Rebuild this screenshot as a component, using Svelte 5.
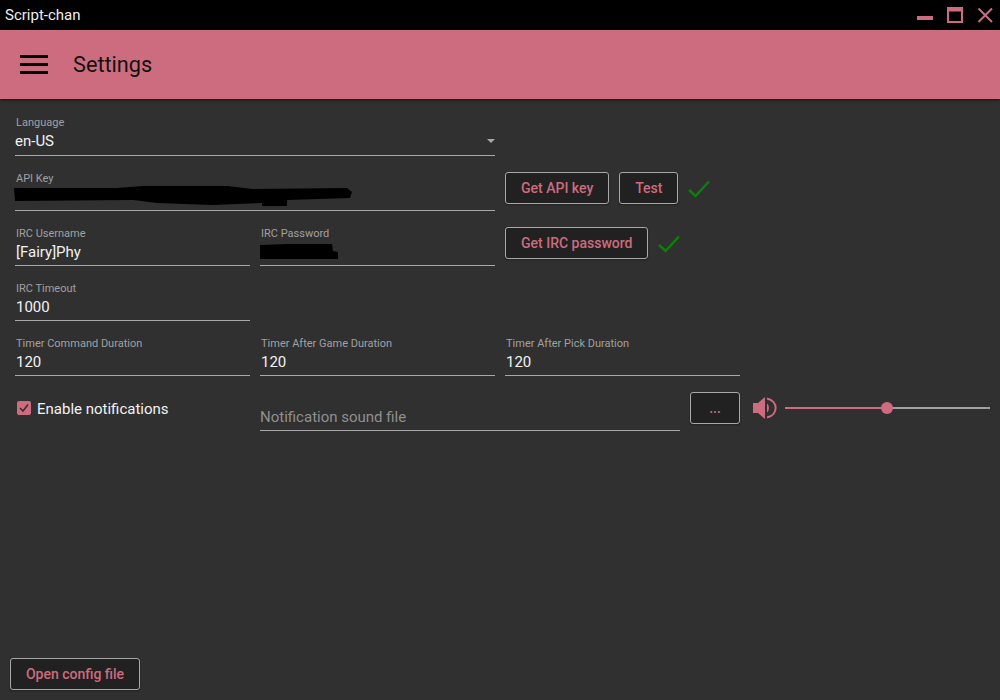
<script>
  const timers = [
    { label: 'Timer Command Duration', value: '120' },
    { label: 'Timer After Game Duration', value: '120' },
    { label: 'Timer After Pick Duration', value: '120' }
  ];
</script>

<div class="window">
  <div class="titlebar">
    <span class="title">Script-chan</span>
    <div class="controls">
      <svg class="ctl" width="16" height="16" viewBox="0 0 16 16"><rect x="0" y="9" width="16" height="4" fill="#cd6c7e"/></svg>
      <svg class="ctl" width="16" height="16" viewBox="0 0 16 16"><path d="M1 3.500H15V15H1Z" fill="none" stroke="#cd6c7e" stroke-width="2"/><rect x="0" y="0" width="16" height="4" fill="#cd6c7e"/></svg>
      <svg class="ctl" width="16" height="16" viewBox="0 0 16 16"><path d="M1.500 1.500L15 15M15 1.500L1.500 15" fill="none" stroke="#cd6c7e" stroke-width="2"/></svg>
    </div>
  </div>

  <header class="appbar">
    <svg class="menu" width="28" height="19" viewBox="0 0 28 19"><path d="M0 1.500H28M0 9.500H28M0 17.500H28" stroke="#000" stroke-width="3"/></svg>
    <h1>Settings</h1>
  </header>

  <main class="content">
    <div class="row">
      <div class="field span2 first">
        <span class="label">Language</span>
        <span class="value select">en-US<i class="arrow"></i></span>
      </div>
    </div>

    <div class="row">
      <div class="field span2">
        <span class="label">API Key</span>
        <span class="value"></span>
        <svg class="blob blob-key" width="340" height="22" viewBox="0 0 340 22"><path d="M0 3L103 3L129 1L213 1L239 4L333 3L338 7L336 13L273 15L273 21L248 21L248 18L199 20L143 18L119 15L1 16Z" fill="#000"/></svg>
      </div>
      <div class="actions">
        <button>Get API key</button>
        <button class="test">Test</button>
        <svg class="check" width="22" height="18" viewBox="0 0 22 18"><path d="M1 10L7.500 16L21 1.500" fill="none" stroke="#0a800a" stroke-width="2.500"/></svg>
      </div>
    </div>

    <div class="row">
      <div class="field">
        <span class="label">IRC Username</span>
        <span class="value">[Fairy]Phy</span>
      </div>
      <div class="field">
        <span class="label">IRC Password</span>
        <span class="value"></span>
        <svg class="blob blob-pass" width="78" height="16" viewBox="0 0 78 16"><path d="M0 1L27 0L72 0L73 7L78 8L78 15L0 15Z" fill="#000"/></svg>
      </div>
      <div class="actions">
        <button>Get IRC password</button>
        <svg class="check" width="22" height="18" viewBox="0 0 22 18"><path d="M1 10L7.500 16L21 1.500" fill="none" stroke="#0a800a" stroke-width="2.500"/></svg>
      </div>
    </div>

    <div class="row">
      <div class="field">
        <span class="label">IRC Timeout</span>
        <span class="value">1000</span>
      </div>
    </div>

    <div class="row">
      {#each timers as t}
        <div class="field">
          <span class="label">{t.label}</span>
          <span class="value">{t.value}</span>
        </div>
      {/each}
    </div>

    <div class="row notif">
      <label class="checkbox">
        <span class="box">
          <svg width="14" height="14" viewBox="0 0 14 14"><path d="M3 7L6 10L11 3.500" fill="none" stroke="#303030" stroke-width="1.500"/></svg>
        </span>
        Enable notifications
      </label>
      <div class="field sound">
        <span class="value placeholder">Notification sound file</span>
      </div>
      <button class="dots">...</button>
      <svg class="speaker" width="24" height="24" viewBox="0 0 24 24">
        <path d="M0 7H5L12 1V23L5 17H0Z" fill="#cd6c7e"/>
        <path d="M14 7.500C16.500 9 16.500 15 14 16.500Z" fill="#cd6c7e"/>
        <path d="M14 2.500C25.500 5 25.500 19 14 21.500" fill="none" stroke="#cd6c7e" stroke-width="2"/>
      </svg>
      <div class="slider">
        <span class="thumb"></span>
      </div>
    </div>
  </main>

  <footer class="footer">
    <button class="config">Open config file</button>
  </footer>
</div>

<style>
  :global(body) {
    margin: 0;
    background: #303030;
  }
  .window {
    width: 1000px;
    height: 700px;
    display: flex;
    flex-direction: column;
    background: #303030;
    color: #fff;
    font-family: Roboto, "Liberation Sans", sans-serif;
    overflow: hidden;
  }
  .titlebar {
    height: 30px;
    flex: none;
    background: #000;
    display: flex;
    align-items: flex-start;
    justify-content: space-between;
  }
  .title {
    font-size: 15px;
    line-height: 30px;
    margin-left: 5px;
    color: #eee;
  }
  .controls {
    display: flex;
    gap: 14px;
    padding: 7px 7px 0 0;
  }
  .ctl {
    display: block;
  }
  .appbar {
    height: 69px;
    flex: none;
    background: #cd6c7e;
    display: flex;
    align-items: center;
    padding-left: 20px;
    box-shadow: 0 1px 3px rgba(0, 0, 0, 0.6);
    position: relative;
  }
  .menu {
    display: block;
  }
  h1 {
    margin: 0 0 0 25px;
    font-size: 21.700px;
    font-weight: 400;
    color: #111;
  }
  .content {
    flex: 1;
    padding: 2px 0 0 15px;
  }
  .row {
    display: flex;
    gap: 10px;
    height: 55px;
  }
  .field {
    position: relative;
    width: 235px;
    box-sizing: border-box;
    border-bottom: 1px solid #a8a8a8;
    display: flex;
    flex-direction: column;
    justify-content: flex-end;
    padding: 0 0 3px 1px;
  }
  .field.first {
    padding-bottom: 4px;
  }
  .span2 {
    width: 480px;
  }
  .label {
    font-size: 11px;
    line-height: 13px;
    color: #a0a0a0;
  }
  .value {
    font-size: 15px;
    line-height: 20px;
    height: 20px;
    margin-top: 2px;
    color: #f2f2f2;
  }
  .select {
    position: relative;
    margin-left: -1px;
  }
  .arrow {
    position: absolute;
    right: 0;
    top: 8px;
    border-left: 4px solid transparent;
    border-right: 4px solid transparent;
    border-top: 4px solid #a8a8a8;
  }
  .blob {
    position: absolute;
    display: block;
  }
  .blob-key {
    left: -1px;
    top: 29px;
  }
  .blob-pass {
    left: 0;
    top: 33px;
  }
  .actions {
    display: flex;
    align-items: flex-start;
    gap: 10px;
    padding-top: 16px;
  }
  button {
    height: 32px;
    box-sizing: border-box;
    padding: 0 15px;
    background: #212121;
    border: 1px solid #a8a8a8;
    border-radius: 3px;
    color: #cd6c7e;
    font: 500 14px Roboto, "Liberation Sans", sans-serif;
    box-shadow: 0 1px 2px rgba(0, 0, 0, 0.3);
  }
  .test {
    width: 59px;
    padding: 0;
  }
  .check {
    display: block;
    margin-top: 8px;
  }
  .notif {
    gap: 0;
    position: relative;
  }
  .checkbox {
    width: 245px;
    flex: none;
    display: flex;
    align-items: flex-start;
    gap: 6px;
    padding: 24px 0 0 2px;
    box-sizing: border-box;
    font-size: 15px;
    line-height: 18px;
    color: #f2f2f2;
  }
  .box {
    width: 14px;
    height: 14px;
    margin-top: 1px;
    border-radius: 2px;
    background: #cd6c7e;
    display: block;
  }
  .box svg {
    display: block;
  }
  .sound {
    width: 420px;
    flex: none;
    padding-left: 0;
  }
  .placeholder {
    color: #8f8f8f;
  }
  .dots {
    width: 50px;
    padding: 0;
    margin: 16px 0 0 10px;
    flex: none;
  }
  .speaker {
    display: block;
    flex: none;
    margin: 20px 0 0 13px;
  }
  .slider {
    position: relative;
    width: 205px;
    height: 2px;
    margin: 31px 0 0 8px;
    flex: none;
    background: linear-gradient(to right, #cd6c7e 0 102px, #a0a0a0 102px);
  }
  .thumb {
    position: absolute;
    left: 96px;
    top: -5px;
    width: 12px;
    height: 12px;
    border-radius: 50%;
    background: #cd6c7e;
  }
  .footer {
    flex: none;
    padding: 0 0 10px 10px;
  }
  .config {
    width: 130px;
    padding: 0;
    display: block;
  }
</style>
